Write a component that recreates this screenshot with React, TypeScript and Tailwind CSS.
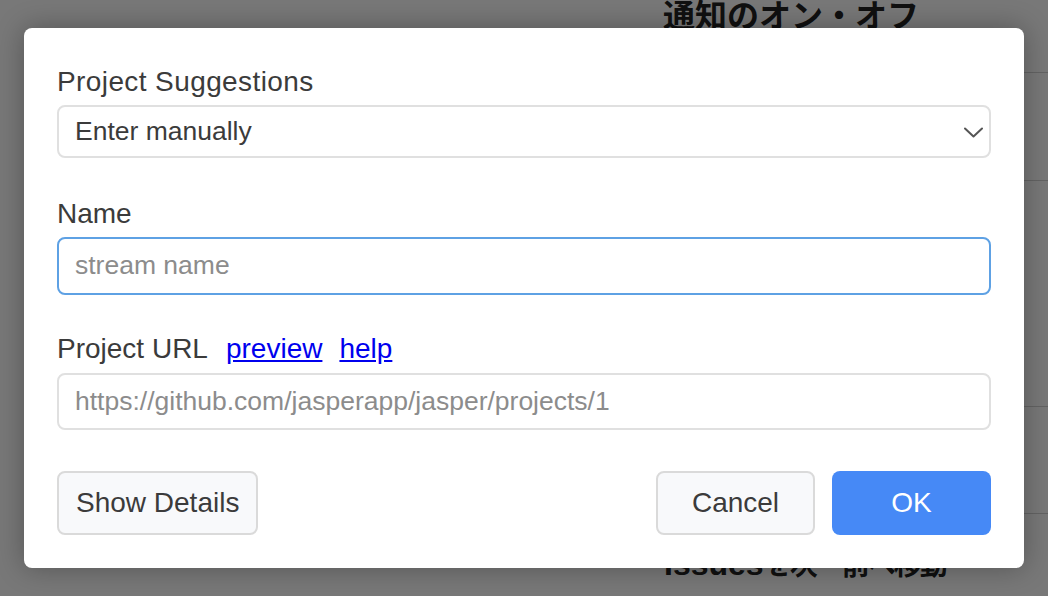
import React from "react";

const label = "text-[28px] leading-[34px] text-[#3b3b3b]";
const field =
  "w-full rounded-lg border-2 bg-white px-[16px] text-[26.5px] text-[#3b3b3b] outline-none placeholder:text-[#8c8c8c]";

const BackgroundPage = () => (
  <div className="flex h-full w-full bg-white">
    <div className="w-[640px]" />
    <div className="flex flex-1 flex-col">
      <div className="h-[73px] border-b border-[#d2d2d2] pl-[23px]">
        <h2 className="text-[32px] leading-[32px] font-bold text-[#222]">
          通知のオン・オフ
        </h2>
      </div>
      <div className="h-[108px] border-b border-[#d2d2d2]" />
      <div className="h-[226px] border-b border-[#d2d2d2]" />
      <div className="h-[107px] border-b border-[#d2d2d2]" />
      <div className="pt-[34px] pl-[24px]">
        <h2 className="text-[32px] leading-[32px] font-bold text-[#222]">
          Issues
          <span className="text-[28px] tracking-[-2px]">を次・前へ移動</span>
        </h2>
      </div>
    </div>
  </div>
);

const App = () => {
  return (
    <div
      className="relative h-[596px] w-[1048px] overflow-hidden"
      style={{ fontFamily: '"Liberation Sans", "Noto Sans CJK JP", sans-serif' }}
    >
      <BackgroundPage />

      <div className="absolute inset-0 flex items-center justify-center bg-black/[0.53]">
        <div className="flex h-[540px] w-[1000px] flex-col rounded-lg bg-white px-[33px] pt-[37px] pb-[33px] shadow-[0_0_28px_rgba(0,0,0,0.3)]">
          <p className={`${label} tracking-[0.4px]`}>Project Suggestions</p>
          <div className="relative mt-[6px]">
            <div
              className={`${field} flex h-[53px] items-center border-[#e0e0e0] pl-[16px]`}
            >
              Enter manually
            </div>
            <svg
              className="absolute right-[8px] top-[22px]"
              width="19"
              height="11"
              viewBox="0 0 19 11"
              fill="none"
            >
              <polyline
                points="1,1.5 9.5,9.5 18,1.5"
                stroke="#555"
                strokeWidth="2"
                strokeLinecap="round"
                strokeLinejoin="round"
              />
            </svg>
          </div>

          <p className={`${label} mt-[39px]`}>Name</p>
          <input
            className={`${field} mt-[6px] h-[58px] border-[#5ea1e4]`}
            placeholder="stream name"
          />

          <p className={`${label} mt-[37px] flex`}>
            <span>Project URL</span>
            <a href="#" className="ml-[18px] text-[#0000ee] underline">
              preview
            </a>
            <a href="#" className="ml-[17px] text-[#0000ee] underline">
              help
            </a>
          </p>
          <input
            className={`${field} mt-[7px] h-[58px] border-[#e0e0e0]`}
            placeholder="https://github.com/jasperapp/jasper/projects/1"
          />

          <div className="mt-[41px] flex items-center">
            <button className="h-[64px] rounded-lg border-2 border-[#dadada] bg-[#f8f9fb] px-[17px] text-[28px] text-[#3b3b3b]">
              Show Details
            </button>
            <div className="ml-auto flex gap-[17px]">
              <button className="h-[64px] w-[159px] rounded-lg border-2 border-[#dadada] bg-[#f8f9fb] text-[28px] text-[#3b3b3b]">
                Cancel
              </button>
              <button className="h-[64px] w-[159px] rounded-lg bg-[#4689f6] text-[28px] text-white">
                OK
              </button>
            </div>
          </div>
        </div>
      </div>
    </div>
  );
};

export default App;
